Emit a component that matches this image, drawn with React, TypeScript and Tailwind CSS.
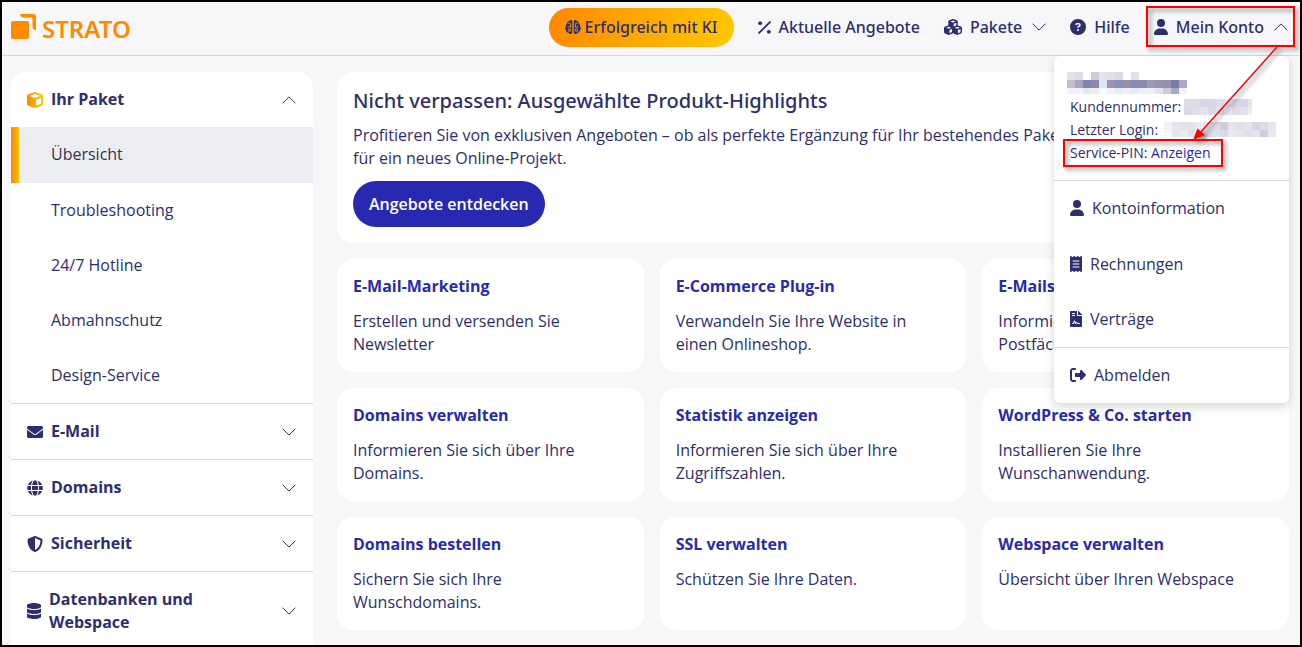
import { FaBrain, FaDatabase, FaEnvelope, FaFileContract, FaGlobe } from "react-icons/fa";
import {
  FaCircleQuestion,
  FaCube,
  FaCubes,
  FaReceipt,
  FaRightFromBracket,
  FaShieldHalved,
  FaUser,
} from "react-icons/fa6";

const paketLinks = ["Troubleshooting", "24/7 Hotline", "Abmahnschutz", "Design-Service"];

const sections = [
  { label: "E-Mail", icon: <FaEnvelope className="size-4 shrink-0" /> },
  { label: "Domains", icon: <FaGlobe className="size-4 shrink-0" /> },
  { label: "Sicherheit", icon: <FaShieldHalved className="size-4 shrink-0" /> },
  { label: "Datenbanken und Webspace", icon: <FaDatabase className="h-4 w-[14px] shrink-0" /> },
];

const cards = [
  { title: "E-Mail-Marketing", text: "Erstellen und versenden Sie Newsletter" },
  { title: "E-Commerce Plug-in", text: "Verwandeln Sie Ihre Website in einen Onlineshop." },
  { title: "E-Mails verwalten", text: "Informieren Sie sich über Ihre Postfächer." },
  { title: "Domains verwalten", text: "Informieren Sie sich über Ihre Domains." },
  { title: "Statistik anzeigen", text: "Informieren Sie sich über Ihre Zugriffszahlen." },
  { title: "WordPress & Co. starten", text: "Installieren Sie Ihre Wunschanwendung." },
  { title: "Domains bestellen", text: "Sichern Sie sich Ihre Wunschdomains." },
  { title: "SSL verwalten", text: "Schützen Sie Ihre Daten." },
  { title: "Webspace verwalten", text: "Übersicht über Ihren Webspace" },
];

// one string per row, one colour per 8px cell, "-" is empty
const nameCells = [
  "e3e1ea dadce8 - cecad9 dde5f2 e3e0e8 dadae7 - dfdfe8",
  "c1bdd0 aaa5bd 7f85b2 9187a9 dce5f1 9b93b0 8790b9 9790ab 848cb5 9088ab 9c9ab9 9693b3 9292b3 777ca9 aaaac5",
  "f3f3f6 f3f3f6 e6e8f0 eeedf2 fafdff f1f1f6 e8eaf2 eeeef4 e7e9f1 eeeef5 eeeff5 e5e4ec cfccd8 a2aac8 f1f1f7",
];
const numberCells = [
  "dddde8 dcdbe6 d6d6e4 d8d8e5 dcdce8 dedee9 d9d9e6 d5d5e3 e6e4ea",
  "d9d9e5 dfdfe9 e3e3ec dadae6 e0e0ea e6e6ef dcdce8 e2e2ec efedf2",
];
const loginCells = [
  "f2f0f3 e6e4ec e2e2eb e5e4ed ecebf1 dedde8 dcdce8 cfcddd e5e5ed e0dfe9 e3e3ec d6d5e2 dcdbe6 e6e5ec",
  "f8f7f9 e6e5ee eceaf1 e2e1eb e9e9f0 d8d8e5 e0dfe9 dadae6 e9e9f0 e5e5ee e0e0ea e4e4ec ccccdc e9e8ef",
];

function Mosaic({ rows, height, className }: { rows: string[]; height: number; className: string }) {
  return (
    <svg className={className} viewBox={`0 0 120 ${height}`} preserveAspectRatio="xMinYMin slice" shapeRendering="crispEdges" aria-hidden="true">
      {rows.map((row, y) =>
        row.split(" ").map((color, x) =>
          color === "-" ? null : <rect key={`${x}-${y}`} x={x * 8} y={y * 8} width="8" height="8" fill={`#${color}`} />
        )
      )}
    </svg>
  );
}

function Chevron({ up = false }: { up?: boolean }) {
  return (
    <svg viewBox="0 0 14 8" className="h-2 w-[14px] shrink-0" fill="none" stroke="currentColor" strokeWidth="1" aria-hidden="true">
      <path d={up ? "M.6 7.3 7 .9l6.4 6.4" : "M.6.7 7 7.1 13.4.7"} />
    </svg>
  );
}

function Logo() {
  return (
    <a href="#" className="flex items-center gap-1.5 text-[#ff8a00]">
      <svg viewBox="0 0 25 25" className="size-[25px]" fill="currentColor" aria-hidden="true">
        <rect x="0" y="7" width="18" height="18" rx="2" />
        <path d="M9 0h13.500Q25 0 25 2.500V16.200Q21.500 15.800 21.500 13V5.200Q21.500 3.500 19.800 3.500H12.500Q9.600 3.500 9 0Z" />
      </svg>
      <span className="pt-1 font-['Noto_Sans',sans-serif] text-2xl leading-6 font-semibold">STRATO</span>
    </a>
  );
}

function Brain() {
  return (
    <span className="relative size-4">
      <FaBrain className="size-4" />
      <svg viewBox="0 0 16 16" className="absolute inset-0 size-4" fill="none" stroke="#ff9d00" strokeWidth=".9" aria-hidden="true">
        <path d="M8 .5v15M3 5.200c.2-1.400 2.600-1.600 2.600-.1M5.600 5.100V8M13 5.200c-.2-1.400-2.600-1.600-2.600-.1M10.400 5.100V8M2.500 8H6M10 8h3.500" />
        <circle cx="4.600" cy="11.200" r="1.300" />
        <circle cx="11.400" cy="11.200" r="1.300" />
      </svg>
    </span>
  );
}

function Percent() {
  return (
    <svg viewBox="0 0 12 12" className="size-[13px]" fill="currentColor" aria-hidden="true">
      <circle cx="2" cy="2" r="1.800" />
      <circle cx="10" cy="10" r="1.800" />
      <path d="M1 11 11 1" stroke="currentColor" strokeWidth="1.700" strokeLinecap="round" />
    </svg>
  );
}

function Header() {
  return (
    <header className="flex h-[54px] items-center justify-between border-b border-[#d4d4e4] pr-3 pl-[9px]">
      <div className="pb-1">
        <Logo />
      </div>
      <nav className="flex items-center gap-6 pb-[3px] font-['Noto_Sans',sans-serif] font-medium">
        <a href="#" className="flex h-[39px] items-center gap-1 rounded-full bg-linear-100 from-[#ff8800] to-[#ffc800] px-4">
          <Brain />
          Erfolgreich mit KI
        </a>
        <a href="#" className="flex items-center gap-2">
          <Percent />
          Aktuelle Angebote
        </a>
        <button className="flex items-center gap-2">
          <FaCubes className="h-4 w-[18px]" />
          <span className="pr-0.5">Pakete</span>
          <Chevron />
        </button>
        <a href="#" className="flex items-center gap-2">
          <FaCircleQuestion className="size-4" />
          Hilfe
        </a>
        <button className="flex items-center gap-2" aria-expanded="true">
          <FaUser className="h-4 w-[14px]" />
          <span className="pr-0.5">Mein Konto</span>
          <Chevron up />
        </button>
      </nav>
    </header>
  );
}

function Sidebar() {
  return (
    <aside className="w-[302px] shrink-0 rounded-t-2xl bg-white">
      <button className="flex h-[55px] w-full items-center gap-2 pr-[17px] pl-4 text-left font-bold">
        <svg className="absolute size-0" aria-hidden="true">
          <linearGradient id="amber">
            <stop stopColor="#ff8a00" />
            <stop offset="1" stopColor="#ffc800" />
          </linearGradient>
        </svg>
        <FaCube className="size-4" fill="url(#amber)" />
        <span className="grow pb-0.5">Ihr Paket</span>
        <Chevron up />
      </button>
      <nav>
        <a href="#" className="flex h-14 bg-[#ecedf2] leading-[54px] text-[#33334f]">
          <span className="mr-8 w-2 bg-linear-to-r from-[#ff8800] to-[#ffc000]" />
          Übersicht
        </a>
        {paketLinks.map((link) => (
          <a key={link} href="#" className="flex h-[55px] items-center pb-0.5 pl-10">
            {link}
          </a>
        ))}
      </nav>
      {sections.map(({ label, icon }) => (
        <button
          key={label}
          className="flex w-full items-center gap-2 border-t border-[#d4d4e4] py-4 pr-[17px] pl-4 text-left leading-[23px] font-bold"
        >
          {icon}
          <span className="grow pr-16">{label}</span>
          <Chevron />
        </button>
      ))}
    </aside>
  );
}

function Promo() {
  return (
    <section className="rounded-2xl bg-white p-4">
      <h2 className="mb-2.5 font-['Noto_Sans',sans-serif] text-xl leading-[26px] font-medium">
        Nicht verpassen: Ausgewählte Produkt-Highlights
      </h2>
      <p className="leading-[23px]">
        Profitieren Sie von exklusiven Angeboten – ob als perfekte Ergänzung für Ihr bestehendes Paket oder
        <br />
        für ein neues Online-Projekt.
      </p>
      <button className="mt-[11px] h-[46px] rounded-full bg-[#272ab0] px-4 font-semibold text-white">
        Angebote entdecken
      </button>
    </section>
  );
}

function AccountMenu() {
  return (
    <div className="absolute top-[54px] right-[11px] w-[235px] rounded-md bg-white shadow-[0_4px_10px_rgba(0,0,0,0.16)]">
      <div className="border-b border-[#d4d4e4] pt-4 pb-4 text-sm leading-[23px]">
        <div className="h-[23px] pl-[13px]">
          <Mosaic rows={nameCells} height={22} className="h-[22px] w-[120px]" />
        </div>
        <div className="flex items-center gap-[3px] pl-4">
          Kundennummer: <Mosaic rows={numberCells} height={16} className="h-4 w-[68px]" />
        </div>
        <div className="flex items-center gap-1.5 pl-4">
          Letzter Login: <Mosaic rows={loginCells} height={15} className="h-[15px] w-[112px]" />
        </div>
        <div className="pl-4">
          Service-PIN: <button className="text-[#272ab0]">Anzeigen</button>
        </div>
      </div>
      <a href="#" className="flex h-[55px] items-center gap-2 pb-0.5 pl-4">
        <FaUser className="h-4 w-[14px]" />
        Kontoinformation
      </a>
      <a href="#" className="flex h-[55px] items-center gap-2 pl-4">
        <FaReceipt className="h-4 w-3" />
        Rechnungen
      </a>
      <a href="#" className="flex h-14 items-center gap-2 pl-4">
        <FaFileContract className="h-4 w-3" />
        Verträge
      </a>
      <a href="#" className="flex h-14 items-center gap-2 border-t border-[#d4d4e4] pb-0.5 pl-4">
        <FaRightFromBracket className="size-4" />
        Abmelden
      </a>
    </div>
  );
}

// red frames and arrow drawn over the account menu
function Marker() {
  return (
    <svg viewBox="0 0 260 180" className="pointer-events-none absolute top-0 right-0 h-[180px] w-[260px] drop-shadow-[3px_3px_2px_rgba(0,0,0,0.45)]" aria-hidden="true">
      <g fill="none" stroke="#fa0000" strokeWidth="2">
        <rect x="107" y="5" width="147" height="39" />
        <rect x="24" y="138" width="158" height="26" />
        <path d="M237 45 159 132" strokeWidth="1.500" />
      </g>
      <path d="M153 138 157.500 126.500 165 133Z" fill="#fa0000" />
    </svg>
  );
}

export default function App() {
  return (
    <div className="relative h-screen overflow-hidden border-2 border-black bg-[#f7f7fa] font-['Open_Sans','Noto_Sans',sans-serif] text-base text-[#2e2e6e]">
      <Header />
      <div className="flex gap-6 pt-4 pr-[11px] pl-[9px]">
        <Sidebar />
        <main className="flex grow flex-col gap-4">
          <Promo />
          <div className="grid auto-rows-fr grid-cols-3 gap-4">
            {cards.map(({ title, text }) => (
              <a key={title} href="#" className="rounded-2xl bg-white p-4 leading-[23px]">
                <h3 className="mb-3 font-bold text-[#2a2aad]">{title}</h3>
                <p>{text}</p>
              </a>
            ))}
          </div>
        </main>
      </div>
      <AccountMenu />
      <Marker />
    </div>
  );
}
